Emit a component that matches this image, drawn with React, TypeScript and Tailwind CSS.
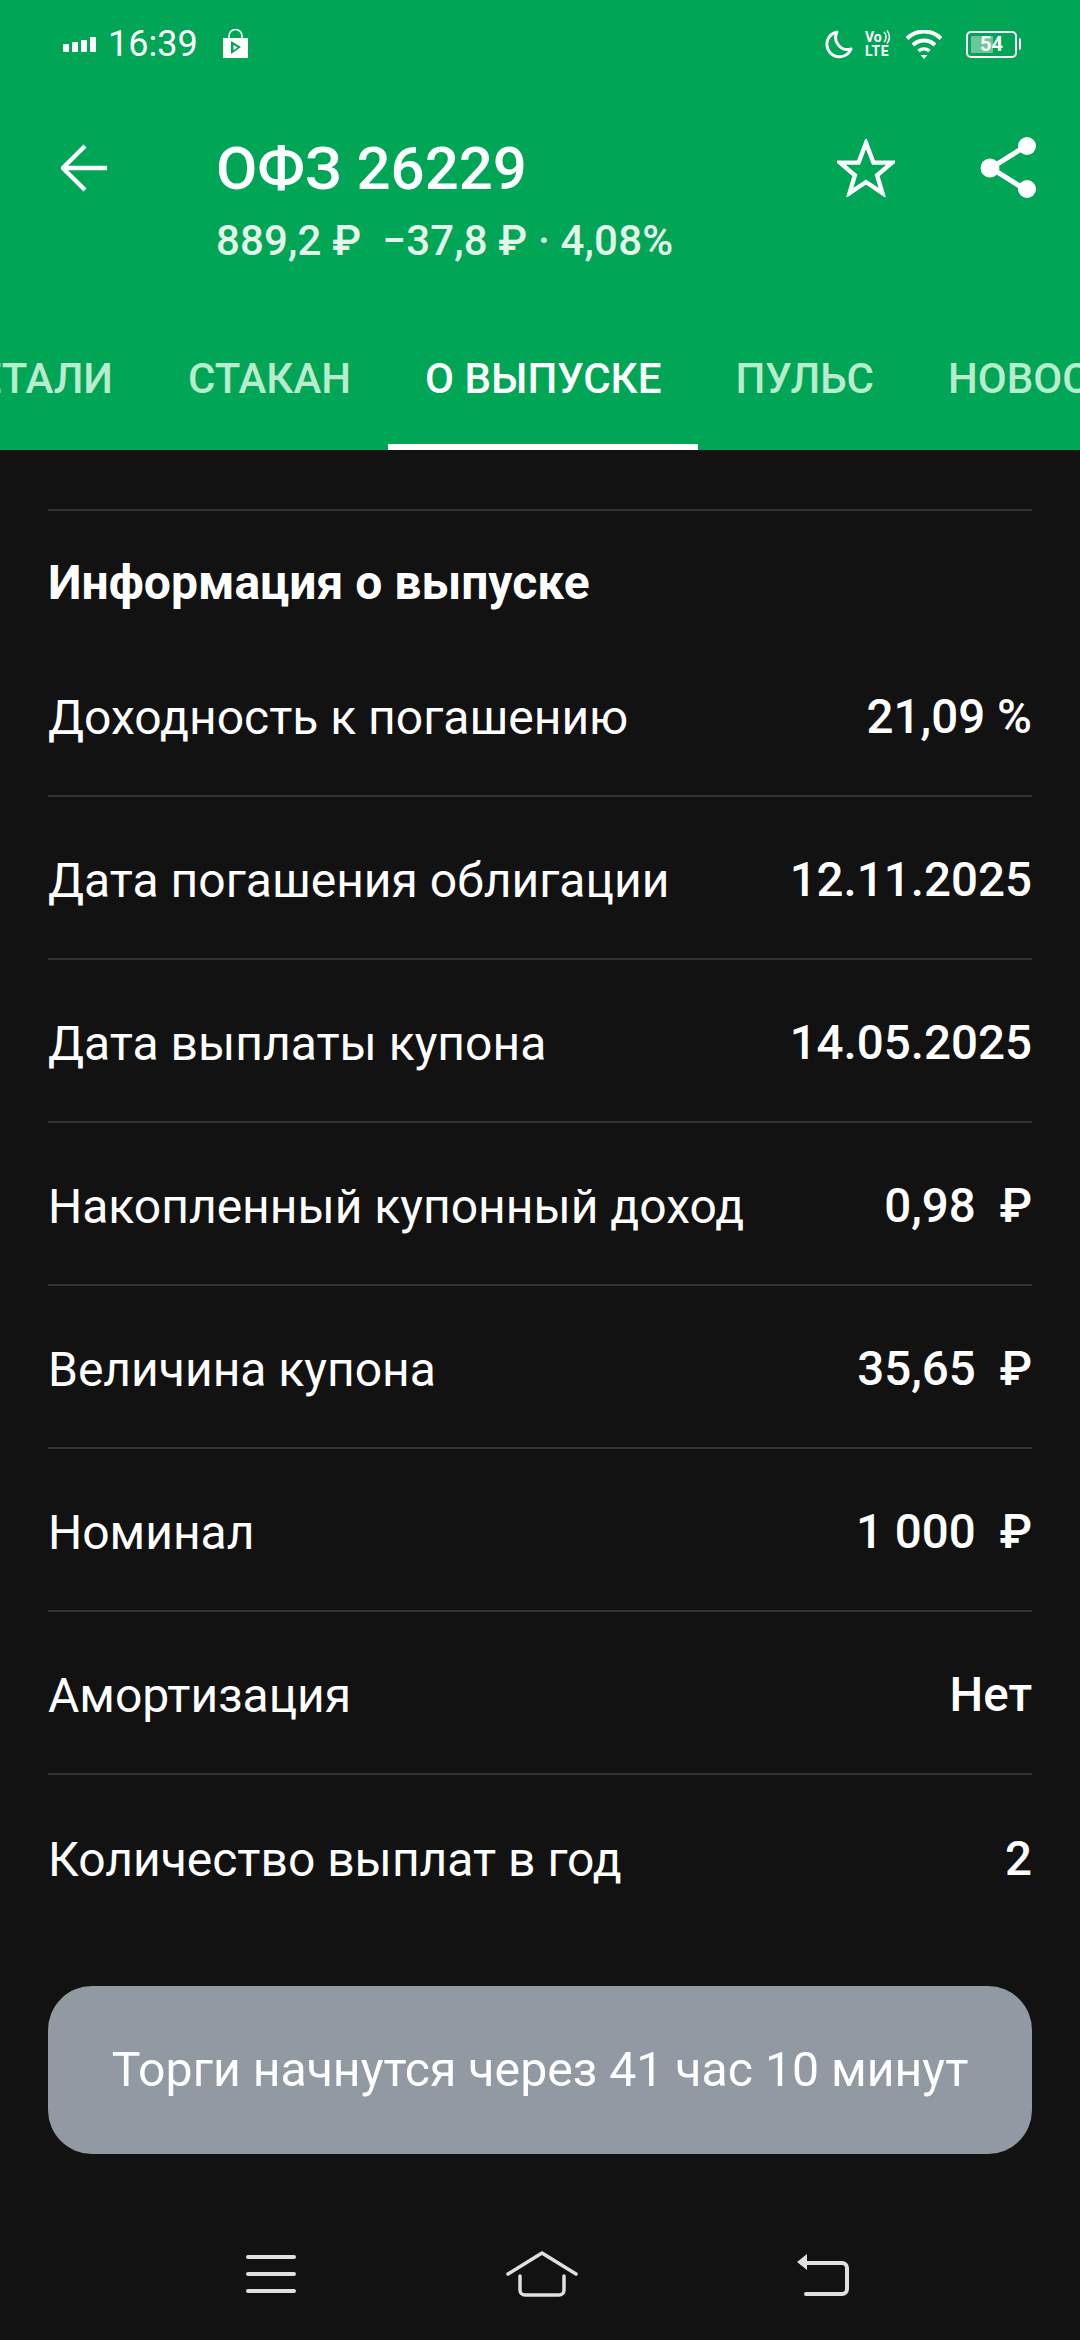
const rows = [
  { label: "Доходность к погашению", value: "21,09 %" },
  { label: "Дата погашения облигации", value: "12.11.2025" },
  { label: "Дата выплаты купона", value: "14.05.2025" },
  { label: "Накопленный купонный доход", value: "0,98  ₽" },
  { label: "Величина купона", value: "35,65  ₽" },
  { label: "Номинал", value: "1 000  ₽" },
  { label: "Амортизация", value: "Нет" },
  { label: "Количество выплат в год", value: "2" },
];

const tabs = ["СТАКАН", "О ВЫПУСКЕ", "ПУЛЬС", "НОВОСТИ"];

function StatusBar() {
  return (
    <div className="flex h-[88px] items-center justify-between pl-[63px] pr-[59px] text-white">
      <div className="flex items-center">
        <div className="flex items-end gap-[3px]">
          <div className="h-[8px] w-[6px] rounded-[1px] bg-white" />
          <div className="h-[10px] w-[6px] rounded-[1px] bg-white" />
          <div className="h-[12px] w-[6px] rounded-[1px] bg-white" />
          <div className="h-[15px] w-[6px] rounded-[1px] bg-white" />
        </div>
        <span className="ml-[12px] text-[36px] leading-none">16:39</span>
        <svg className="ml-[24px]" width="27" height="30" viewBox="0 0 27 30">
          <path d="M7 10V7a6.500 6.500 0 0 1 13 0v3" fill="none" stroke="#fff" strokeWidth="1.600" />
          <path d="M1 9h25v20H1z" fill="#fff" />
          <path d="M9 12l10 6-10 7z" fill="#00a556" />
          <path d="M11.500 16l4 2.300-4 3z" fill="#fff" />
        </svg>
      </div>
      <div className="flex items-center">
        <svg width="28" height="29" viewBox="0 0 28 29">
          <path d="M12 2a12.500 12.500 0 1 0 14 17A12 12 0 0 1 12 2z" fill="none" stroke="#fff" strokeWidth="3" strokeLinejoin="round" />
        </svg>
        <div className="relative ml-[12px] flex h-[28px] w-[27px] flex-col text-[14px] font-bold leading-[14px]">
          <span>Vo</span>
          <span className="tracking-[0.5px]">LTE</span>
          <svg className="absolute right-0 top-0" width="9" height="14" viewBox="0 0 9 14">
            <path d="M1 2a7 7 0 0 1 0 10M4 0.500a10 10 0 0 1 0 13" fill="none" stroke="#fff" strokeWidth="1.500" />
          </svg>
        </div>
        <svg className="ml-[14px]" width="36" height="29" viewBox="0 0 36 29">
          <path d="M1 8.500a24 24 0 0 1 34 0" fill="none" stroke="#fff" strokeWidth="4" />
          <path d="M7 15a16 16 0 0 1 22 0" fill="none" stroke="#fff" strokeWidth="4" />
          <path d="M12.500 21a8.500 8.500 0 0 1 11 0" fill="none" stroke="#fff" strokeWidth="3.500" />
          <path d="M14.500 25h7L18 29z" fill="#fff" />
        </svg>
        <div className="ml-[24px] flex items-center">
          <div className="relative flex h-[27px] w-[51px] items-center justify-center overflow-hidden rounded-[5px] border-2 border-white">
            <div className="absolute inset-y-[3px] left-[3px] w-[22px] rounded-[1px] bg-[#6cc797]" />
            <span className="relative text-[20px] font-bold leading-none">54</span>
          </div>
          <div className="ml-[2px] h-[12px] w-[2px] rounded-r-sm bg-white" />
        </div>
      </div>
    </div>
  );
}

function TitleBar() {
  return (
    <div className="mt-[49px] flex h-[116px] items-start pl-[61px] pr-[42px] text-white">
      <svg className="mt-[7px]" width="48" height="48" viewBox="0 0 50 50">
        <path d="M48 25H3M25 2L2 25l23 23" fill="none" stroke="#fff" strokeWidth="4.500" />
      </svg>
      <div className="ml-[107px] flex-1">
        <div className="text-[60px] font-medium leading-[64px]">ОФЗ 26229</div>
        <div className="mt-[17px] whitespace-pre text-[42px] font-medium leading-[46px] tracking-[0.15px] text-[#e4f5ea]">889,2 ₽  −37,8 ₽ · 4,08%</div>
      </div>
      <svg className="mt-[2px]" width="58" height="58" viewBox="0 0 60 60">
        <path d="M30 4l7.700 20.500H57L41.500 37.500 47 56 30 44.500 13 56l5.500-18.500L3 24.500h19.300z" fill="none" stroke="#fff" strokeWidth="4.500" />
      </svg>
      <svg className="ml-[85px] mt-[-1px]" width="58" height="64" viewBox="0 0 58 64">
        <path d="M46 10L11 32l35 22" fill="none" stroke="#fff" strokeWidth="5" />
        <circle cx="47" cy="10" r="9" fill="#fff" />
        <circle cx="10" cy="32" r="9.500" fill="#fff" />
        <circle cx="47" cy="53" r="9" fill="#fff" />
      </svg>
    </div>
  );
}

function Tabs() {
  return (
    <div className="mt-[65px] flex h-[132px] overflow-hidden text-[42px] font-medium text-[#b9ebcd]">
      <div className="flex w-[151px] shrink-0 justify-end">
        <div className="shrink-0 pr-[38px] pt-[39px] leading-[44px]">ДЕТАЛИ</div>
      </div>
      {tabs.map((tab) => {
        const active = tab === "О ВЫПУСКЕ";
        return (
          <div
            key={tab}
            className={
              active
                ? "shrink-0 whitespace-nowrap border-b-[6px] border-white px-[37px] pt-[39px] leading-[44px] text-white"
                : "shrink-0 whitespace-nowrap px-[37px] pt-[39px] leading-[44px]"
            }
          >
            {tab}
          </div>
        );
      })}
    </div>
  );
}

function NavBar() {
  return (
    <div className="mt-[97px] flex items-center pl-[246px]">
      <svg width="50" height="40" viewBox="0 0 50 40">
        <path d="M2 3h46M2 20h46M2 37h46" fill="none" stroke="#e0e0e0" strokeWidth="4" strokeLinecap="round" />
      </svg>
      <svg className="ml-[210px]" width="72" height="46" viewBox="0 0 72 46">
        <path d="M2 23L36 2l34 21" fill="none" stroke="#e0e0e0" strokeWidth="3.500" strokeLinecap="round" strokeLinejoin="round" />
        <path d="M14 25v14a5 5 0 0 0 5 5h34a5 5 0 0 0 5-5V25" fill="none" stroke="#e0e0e0" strokeWidth="3.500" strokeLinecap="round" />
      </svg>
      <svg className="ml-[218px]" width="54" height="44" viewBox="0 0 54 44">
        <path d="M6 11h40a5 5 0 0 1 5 5v21a5 5 0 0 1-5 5H10" fill="none" stroke="#e0e0e0" strokeWidth="4" strokeLinecap="round" />
        <path d="M11 2v16L1 10z" fill="#e0e0e0" />
      </svg>
    </div>
  );
}

export default function App() {
  return (
    <div className="h-[2340px] w-[1080px] overflow-hidden bg-[#121212] font-['Roboto',sans-serif]">
      <div className="h-[450px] bg-[#00a556]">
        <StatusBar />
        <TitleBar />
        <Tabs />
      </div>
      <div className="px-[48px]">
        <div className="mt-[59px] h-[2px] bg-[#333333]" />
        <div className="flex h-[123px] items-end pb-[23px] text-[48px] font-bold leading-[56px] text-white">Информация о выпуске</div>
        {rows.map((row, i) => (
          <div
            key={row.label}
            className={
              i < rows.length - 1
                ? "flex h-[163px] items-center justify-between border-b-2 border-[#333333] pt-[6px] text-[48px] text-white"
                : "flex h-[163px] items-center justify-between pt-[6px] text-[48px] text-white"
            }
          >
            <span>{row.label}</span>
            <span className="whitespace-pre text-[47.500px] font-medium">{row.value}</span>
          </div>
        ))}
        <div className="mt-[48px] flex h-[168px] items-center justify-center rounded-[44px] bg-[#9199a3] text-[48.200px] text-white">
          Торги начнутся через 41 час 10 минут
        </div>
      </div>
      <NavBar />
    </div>
  );
}
